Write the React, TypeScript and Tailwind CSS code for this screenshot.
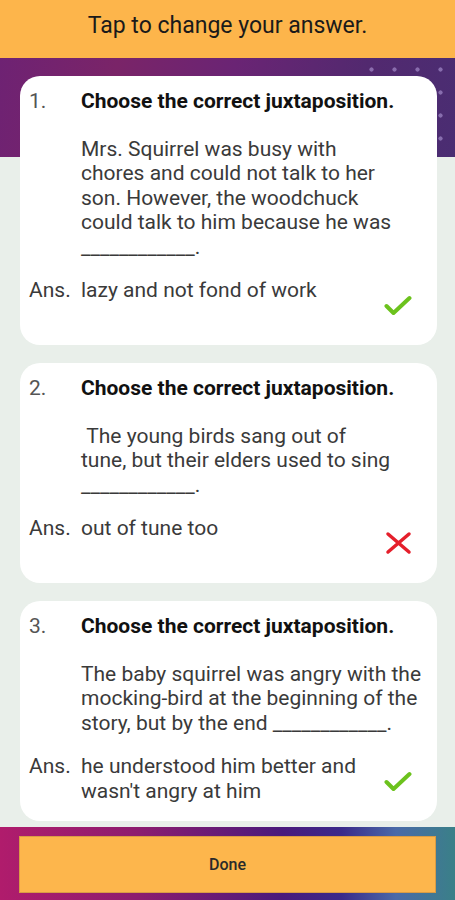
import React from 'react';

interface Question {
    num: string;
    body: React.ReactNode;
    answer: React.ReactNode;
    correct: boolean;
}

const questions: Question[] = [
    {
        num: "1.",
        body: (
            <>
                Mrs. Squirrel was busy with<br/>
                chores and could not talk to her<br/>
                son. However, the woodchuck<br/>
                could talk to him because he was<br/>
                ____________.
            </>
        ),
        answer: "lazy and not fond of work",
        correct: true
    },
    {
        num: "2.",
        body: (
            <>
                &nbsp;The young birds sang out of<br/>
                tune, but their elders used to sing<br/>
                ____________.
            </>
        ),
        answer: "out of tune too",
        correct: false
    },
    {
        num: "3.",
        body: (
            <>
                The baby squirrel was angry with the<br/>
                mocking-bird at the beginning of the<br/>
                story, but by the end ____________.
            </>
        ),
        answer: (
            <>
                he understood him better and<br/>
                wasn't angry at him
            </>
        ),
        correct: true
    }
];

const CheckMark = () => (
    <svg width="28" height="21" viewBox="0 0 28 21">
        <path d="M2.5 11 L9.5 18 L25.5 3" fill="none" stroke="#6cc21d" strokeWidth="4"
              strokeLinecap="round" strokeLinejoin="round"/>
    </svg>
);

const CrossMark = () => (
    <svg width="27" height="24" viewBox="0 0 27 24">
        <path d="M3 3 L24 21 M24 3 L3 21" fill="none" stroke="#e51f2b" strokeWidth="3.5"
              strokeLinecap="round"/>
    </svg>
);

const QuestionCard: React.FC<{ q: Question }> = ({q}) => (
    <div className="bg-white rounded-[20px] pt-[13px] pb-[15px] pl-[9px] pr-[25px]">
        <div className="flex leading-[24.5px] text-[21px]">
            <span className="w-[52px] shrink-0 text-[#555]">{q.num}</span>
            <span className="font-bold text-[#111] whitespace-nowrap">Choose the correct juxtaposition.</span>
        </div>
        <div className="flex mt-[23px] leading-[24.5px] text-[21px] text-[#3a3a3a]">
            <span className="w-[52px] shrink-0"/>
            <p className="whitespace-nowrap">{q.body}</p>
        </div>
        <div className="flex mt-[19px] leading-[24.5px] text-[21px] text-[#3a3a3a]">
            <span className="w-[52px] shrink-0">Ans.</span>
            <p className="flex-1 whitespace-nowrap">{q.answer}</p>
            <div className="h-[52px] w-[28px] flex items-center justify-center pt-[2px]">
                {q.correct ? <CheckMark/> : <CrossMark/>}
            </div>
        </div>
    </div>
);

export default function App() {
    return (
        <div className="w-[455px] h-[900px] flex flex-col overflow-hidden bg-[#e9efea] font-['Roboto',sans-serif]">
            <header className="h-[58px] shrink-0 bg-[#fdb54b] flex items-center justify-center pb-[6px]">
                <h1 className="text-[23px] text-[#1a1a1a]">Tap to change your answer.</h1>
            </header>

            <main className="relative flex-1 overflow-hidden">
                <div className="absolute inset-x-0 top-0 h-[99px] bg-[linear-gradient(100deg,#6e2273_0%,#7a2468_25%,#6a2474_50%,#52296f_78%,#4a2d72_100%)]">
                    <div className="absolute right-0 top-0 w-[95px] h-[99px] opacity-80 bg-[radial-gradient(circle,rgba(200,180,240,0.6)_1.8px,transparent_2.4px)] bg-size-[23px_23px]"/>
                </div>
                <div className="relative flex flex-col gap-[18px] px-[20px] pt-[18px] w-[457px]">
                    {questions.map((q, i) => (
                        <QuestionCard key={i} q={q}/>
                    ))}
                </div>
            </main>

            <footer className="h-[73px] shrink-0 px-[19px] pt-[9px] pb-[7px] bg-[linear-gradient(90deg,#b01c6c_0%,#8d1d6f_30%,#4a1a7c_62%,#3b2a8a_75%,#4a6aa8_87%,#3a8088_100%)]">
                <button className="w-full h-[57px] bg-[#fdb64c] border border-[#d99c45] text-[16px] font-medium text-[#2a2a2a]">
                    Done
                </button>
            </footer>
        </div>
    );
}
